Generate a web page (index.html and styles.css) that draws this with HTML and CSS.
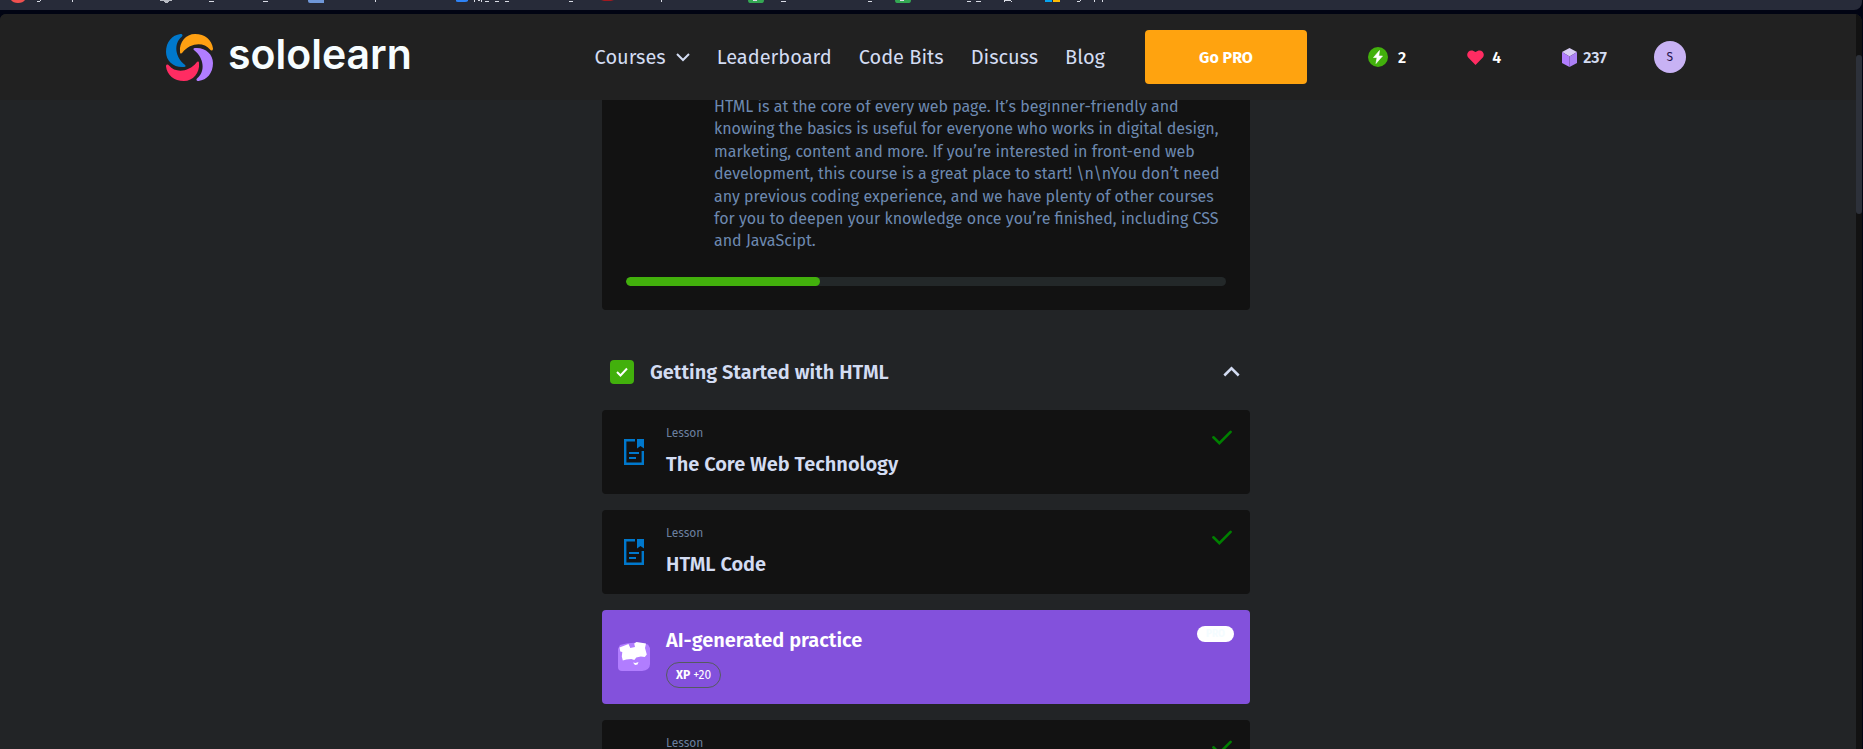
FILE: index.html
```html
<!DOCTYPE html>
<html lang="en">
<head>
<meta charset="utf-8">
<title>Sololearn – HTML course</title>
<link rel="stylesheet" href="styles.css">
</head>
<body>
<svg width="0" height="0" class="sprite" aria-hidden="true">
  <symbol id="lesson" viewBox="0 0 20 26"><path d="M11 1.2H1.2v23.6h17.6V12" fill="none" stroke="#0078cc" stroke-width="2.4"/><path d="M13 0h7v9.500l-3.500-2.500-3.500 2.500z" fill="#0078cc"/><path d="M5 14h10M5 19h7" stroke="#0078cc" stroke-width="2.200"/></symbol>
  <symbol id="done" viewBox="0 0 20 15"><path d="M1.400 7.300l6 5.800L18.600 1.800" fill="none" stroke="#008000" stroke-width="2.600" stroke-linecap="round"/></symbol>
</svg>
<div class="bookmarks" aria-hidden="true">
  <svg width="1120" height="4">
    <path d="M11 0h14q-2 3-7 3t-7-3z" fill="#f0504f"/>
    <path d="M160 0h12v1h-3v1h-1v1h-3v-1h-1v-1h-4z" fill="#b9bcc4"/>
    <path d="M308 0h16v3h-14q-2 0-2-2z" fill="#6f97d8"/>
    <path d="M456 0h12v1q-1 1-3 1h-7q-2 0-2-1z" fill="#2e83f7"/>
    <path d="M601 0h13l-3 1h-7z" fill="#a3191f"/>
    <path d="M748 0h16q0 3-2 3h-12q-2 0-2-3zM895 0h16q0 3-2 3h-12q-2 0-2-3z" fill="#34a853"/>
    <path d="M1045 0h7v2h-7z" fill="#08a4ee"/><path d="M1053 0h7v2h-7z" fill="#fbbb06"/>
    <path d="M753 .5h4M900 .5h4M37 1.500h3M40 .5h1M72.500 0v2M209 1.500h5M263 1.500h5M375.500 0v2M474.500 0v2M478 .5h2M481.500 0v2M485 1.500h4M495 1.500h4M505 1.500h4M569 1.500h4M661.500 0v2M781 1.500h5M868 1.500h4M967 1.500h4M976 1.500h5M1004 .5h7M1004.500 1v1M1011.500 1v1M1077 1.500h3M1080 .5h1M1094.500 0v2M1102.500 0v2" stroke="#d9dce5" fill="none"/>
  </svg>
</div>
<div class="viewport">
  <div class="page">
    <header class="header">
      <div class="header-inner">
        <a class="logo" href="#" aria-label="sololearn">
          <svg width="47" height="47" viewBox="0 0 47 47" aria-hidden="true">
            <defs><path id="petal" d="M14 18C13 8 20 0 29 0C39 0 46 6 47 14.500C47 17 45 17 44 15.500C37.500 7.500 24 9 16.500 18.500C15.500 20 14 20 14 18Z"/></defs>
            <use href="#petal" fill="#ffa012"/>
            <use href="#petal" fill="#b17dff" transform="rotate(90 23.500 23.500)"/>
            <use href="#petal" fill="#ff2c62" transform="rotate(180 23.500 23.500)"/>
            <use href="#petal" fill="#0078cc" transform="rotate(270 23.500 23.500)"/>
          </svg>
          <span class="wordmark">sololearn</span>
        </a>
        <nav class="nav">
          <a class="courses" href="#">Courses <svg width="14" height="9" viewBox="0 0 14 9"><path d="M1 1l6 6 6-6" fill="none" stroke="currentColor" stroke-width="2"/></svg></a>
          <a href="#">Leaderboard</a><a href="#">Code Bits</a><a href="#">Discuss</a><a href="#">Blog</a>
        </nav>
        <button class="pro" type="button">Go PRO</button>
        <div class="stats">
          <span class="stat streak"><svg width="20" height="20" viewBox="0 0 20 20"><circle cx="10" cy="10" r="10" fill="#42b00c"/><path d="M11.500 3.500L5.500 10.500h3.500L8 16.500l6.500-7.500h-3.700z" fill="#fff" stroke="#fff" stroke-width=".6"/></svg>2</span>
          <span class="stat hearts"><svg width="17" height="15" viewBox="0 0 17 15"><path d="M8.500 15L1.200 7.500C-2 3.500 3-2.500 8.500 2 14-2.500 19 3.500 15.800 7.500z" fill="#ff2c62"/></svg>4</span>
          <span class="stat bits"><svg width="15" height="19" viewBox="0 0 15 19"><path d="M7.500 0L15 4 7.500 8.500 0 4z" fill="#d8cdf5"/><path d="M0 4l7.500 4.500V19L0 15z" fill="#b17dff"/><path d="M15 4L7.500 8.500V19l7.500-4z" fill="#ab80f5"/></svg>237</span>
          <button class="avatar" type="button">S</button>
        </div>
      </div>
    </header>
    <main class="content">
      <section class="course">
        <p class="description">HTML is at the core of every web page. It’s beginner-friendly and knowing the basics is useful for everyone who works in digital design, marketing, content and more. If you’re interested in front-end web development, this course is a great place to start! \n\nYou don’t need any previous coding experience, and we have plenty of other courses for you to deepen your knowledge once you’re finished, including CSS and JavaScipt.</p>
        <div class="progress" role="progressbar" aria-label="Course progress" aria-valuenow="32" aria-valuemin="0" aria-valuemax="100"><div class="progress-fill" style="width:32.4%"></div></div>
      </section>
      <section class="module">
        <button class="module-head" type="button">
          <span class="tick"><svg width="12" height="10" viewBox="0 0 12 10"><path d="M1 5l3.500 3.500L11 1.500" fill="none" stroke="#fff" stroke-width="2"/></svg></span>
          <span class="module-title">Getting Started with HTML</span>
          <svg width="17" height="11" viewBox="0 0 17 11"><path d="M1.300 9.500l7.200-7.200 7.200 7.200" fill="none" stroke="currentColor" stroke-width="2.500"/></svg>
        </button>
        <a class="item" href="#">
          <span class="item-icon"><svg width="20" height="26"><use href="#lesson"/></svg></span>
          <span class="item-text"><span class="kind">Lesson</span><span class="title">The Core Web Technology</span></span>
          <svg class="done" width="20" height="15"><use href="#done"/></svg>
        </a>
        <a class="item" href="#">
          <span class="item-icon"><svg width="20" height="26"><use href="#lesson"/></svg></span>
          <span class="item-text"><span class="kind">Lesson</span><span class="title">HTML Code</span></span>
          <svg class="done" width="20" height="15"><use href="#done"/></svg>
        </a>
        <a class="item practice" href="#">
          <span class="item-icon"><svg width="32" height="29" viewBox="0 0 32 29"><path d="M2 3Q16-1 30 2.500L32 6v16q0 6-8 7H4q-4 0-4-4V7z" fill="#b17dff"/><path d="M1.500 5.500L10.500 2l1.800 4L17 5l-.8-3.500L18.500 0l9.500 1.500-1 4.500 1.800 6.500-2 2.500-4-.5-4.500 1-2 2.500-3-1-5 .5-3.500 1-1-4 .5-4.500-2-.5z" fill="#fff"/><path d="M15 20.500l2.500.5 3-1-1 2.500-2.500.5z" fill="#fff"/></svg></span>
          <span class="item-text"><span class="title">AI-generated practice</span><span class="xp"><b>XP</b> +20</span></span>
          <span class="badge">PRO</span>
        </a>
        <a class="item" href="#">
          <span class="item-icon"><svg width="20" height="26"><use href="#lesson"/></svg></span>
          <span class="item-text"><span class="kind">Lesson</span></span>
          <svg class="done" width="20" height="15"><use href="#done"/></svg>
        </a>
      </section>
    </main>
  </div>
  <div class="scrollbar"><div class="thumb"></div></div>
</div>
</body>
</html>
```
FILE: styles.css
```css
* { box-sizing: border-box; }
body {
  margin: 0;
  height: 100vh;
  display: flex;
  flex-direction: column;
  gap: 4px;
  padding-right: 1px;
  overflow: hidden;
  background: #010413;
  color: #d3dcf2;
  font-family: "Fira Sans", Roboto, sans-serif;
  font-size: 16px;
}
a { color: inherit; text-decoration: none; }
button { border: 0; padding: 0; font: inherit; color: inherit; cursor: pointer; }
svg { display: block; flex: none; }
.sprite { position: absolute; }

.bookmarks {
  flex: none;
  height: 10px;
  overflow: hidden;
  background: #272b39;
  border-radius: 0 0 8px 0;
}
.viewport {
  flex: 1;
  min-height: 0;
  display: flex;
  overflow: hidden;
  background: #222426;
  border-radius: 6px 8px 0 0;
}
.page { flex: 1; min-width: 0; }

.header {
  position: relative;
  z-index: 1;
  padding-right: 4px;
  background: #212121;
}
.header-inner {
  display: flex;
  align-items: center;
  height: 86px;
  max-width: 1520px;
  margin: 0 auto;
}
.logo {
  display: flex;
  align-items: center;
  gap: 15px;
  margin-right: auto;
}
.wordmark {
  padding-bottom: 6px;
  color: #f7fdff;
  font-family: Inter, sans-serif;
  font-size: 41px;
  font-weight: 600;
  line-height: 48px;
}
.nav {
  display: flex;
  gap: 27px;
  font-size: 20px;
  line-height: 24px;
  white-space: nowrap;
}
.courses { display: flex; align-items: center; gap: 10px; }
.pro {
  width: 162px;
  height: 54px;
  margin-left: 40px;
  border-radius: 4px;
  background: #ffa30f;
  color: #fff;
  font-weight: 700;
}
.stats {
  display: flex;
  align-items: center;
  gap: 61px;
  width: 318px;
  margin-left: 61px;
  color: #fff;
  font-weight: 600;
}
.stat { display: flex; align-items: center; gap: 8px; }
.streak { gap: 10px; }
.bits { gap: 6px; color: #d3dcf2; }
.avatar {
  width: 32px;
  height: 32px;
  margin-left: -14px;
  border-radius: 50%;
  background: #c8b2f4;
  color: #24104a;
  font-size: 12px;
  font-weight: 400;
}

.content { width: 652px; max-width: 100%; margin: 0 auto; padding-right: 4px; }
.course {
  margin-top: -24px;
  padding: 20px 24px 24px;
  border-radius: 4px;
  background: #121212;
}
.description {
  margin: 0 0 24px 88px;
  color: #6d89b0;
  line-height: 1.4;
}
.progress {
  height: 9px;
  border-radius: 5px;
  background: #232829;
  overflow: hidden;
}
.progress-fill { height: 100%; border-radius: 5px; background: #42b00c; }

.module { display: flex; flex-direction: column; gap: 16px; margin-top: 40px; }
.module-head {
  display: flex;
  align-items: center;
  gap: 16px;
  padding: 8px 10px 8px 8px;
  background: none;
  text-align: left;
}
.tick {
  display: grid;
  place-items: center;
  width: 24px;
  height: 24px;
  border-radius: 4px;
  background: #42b00c;
}
.module-title { flex: 1; font-size: 20px; font-weight: 600; line-height: 28px; }
.item {
  display: flex;
  min-height: 84px;
  padding: 16px;
  border-radius: 4px;
  background: #121212;
}
.item-icon { display: grid; place-items: center; width: 32px; margin-right: 16px; }
.item-text { flex: 1; display: flex; flex-direction: column; align-items: flex-start; gap: 11px; }
.kind { color: #6b7f9f; font-size: 12px; line-height: 14px; }
.title { font-size: 20px; font-weight: 600; line-height: 26px; }
.done { margin: 4px 2px 0 0; }
.practice { background: #8351dc; color: #fff; }
.practice .item-text { gap: 8px; }
.practice .title { line-height: 28px; }
.xp {
  padding: 0 9px;
  border: 1px solid #555b5e;
  border-radius: 13px;
  font-size: 12px;
  line-height: 24px;
}
.badge {
  align-self: flex-start;
  width: 37px;
  border-radius: 8px;
  background: #fff;
  color: #f4fcff;
  font-size: 10px;
  font-weight: 700;
  line-height: 16px;
  text-align: center;
}

.scrollbar { flex: none; width: 6px; padding-top: 41px; background: #121212; }
.thumb { height: 159px; border-radius: 3px; background: #2d313a; }
```
